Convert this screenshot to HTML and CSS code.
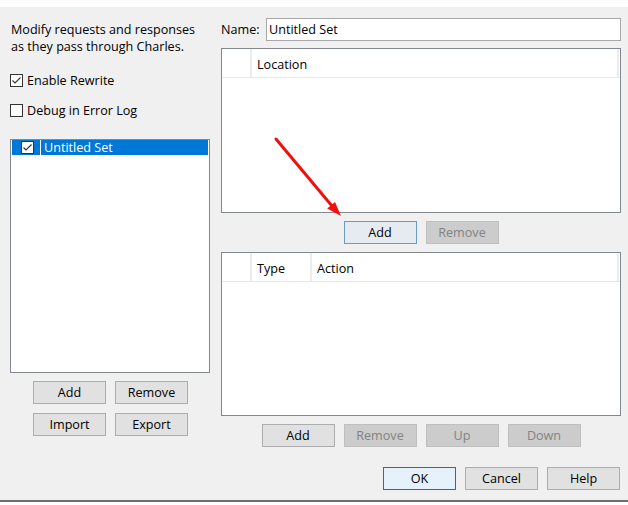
FILE: index.html
```html
<!DOCTYPE html>
<html>
<head>
<meta charset="utf-8">
<link rel="stylesheet" href="styles.css">
</head>
<body>
<div class="dialog">
  <div class="left">
    <p class="desc">Modify requests and responses<br>as they pass through Charles.</p>
    <label class="check first"><span class="box"><svg width="11" height="11" viewBox="0 0 11 11"><path d="M1.5 5.5 L4 8 L9.5 2.5" fill="none" stroke="#333" stroke-width="1.1"/></svg></span>Enable Rewrite</label>
    <label class="check second"><span class="box"></span>Debug in Error Log</label>
    <div class="list">
      <div class="list-row selected">
        <span class="cell-check"><span class="box small"><svg width="11" height="11" viewBox="0 0 11 11"><path d="M1.5 5.5 L4 8 L9.5 2.5" fill="none" stroke="#333" stroke-width="1.2"/></svg></span></span>
        <span class="cell-name">Untitled Set</span>
      </div>
    </div>
    <div class="btn-row left-btns first-row">
      <button class="btn">Add</button>
      <button class="btn">Remove</button>
    </div>
    <div class="btn-row left-btns second-row">
      <button class="btn">Import</button>
      <button class="btn">Export</button>
    </div>
  </div>
  <div class="right">
    <div class="name-row">
      <span class="name-label">Name:</span>
      <div class="name-input">Untitled Set</div>
    </div>
    <div class="table table-loc">
      <div class="thead">
        <span class="th th-blank"></span>
        <span class="th th-last">Location</span>
      </div>
    </div>
    <div class="btn-row center mid-row">
      <button class="btn focused">Add</button>
      <button class="btn disabled">Remove</button>
    </div>
    <div class="table table-act">
      <div class="thead">
        <span class="th th-blank"></span>
        <span class="th th-type">Type</span>
        <span class="th th-last">Action</span>
      </div>
    </div>
    <div class="btn-row center act-row">
      <button class="btn">Add</button>
      <button class="btn disabled">Remove</button>
      <button class="btn disabled">Up</button>
      <button class="btn disabled">Down</button>
    </div>
    <div class="btn-row end ok-row">
      <button class="btn default">OK</button>
      <button class="btn">Cancel</button>
      <button class="btn">Help</button>
    </div>
  </div>
  <svg class="arrow" width="628" height="505" viewBox="0 0 628 505">
    <line x1="276" y1="139" x2="332" y2="206" stroke="#f01010" stroke-width="3" stroke-linecap="round"/>
    <polygon points="341,216 327.2,208.4 335,202" fill="#f01010"/>
  </svg>
</div>
</body>
</html>
```
FILE: styles.css
```css
* { box-sizing: border-box; }
html, body { margin: 0; padding: 0; }
body {
  width: 628px;
  height: 505px;
  background: #ffffff;
  font-family: "Open Sans", "Noto Sans", sans-serif;
  font-size: 12.6px;
  color: #000;
  overflow: hidden;
}
.dialog {
  position: relative;
  margin-top: 7px;
  height: 495px;
  background: #f0f0f0;
  border-bottom: 2px solid #6e6e6e;
  display: flex;
  padding-left: 10px;
}
.left {
  width: 200px;
  display: flex;
  flex-direction: column;
}
.desc {
  margin: 14px 0 0 1px;
  line-height: 17px;
}
.check {
  display: flex;
  align-items: center;
  height: 13px;
  line-height: 13px;
  gap: 4px;
}
.check.first { margin-top: 19px; }
.check.second { margin-top: 17px; }
.box {
  width: 13px;
  height: 13px;
  border: 1px solid #333;
  background: #fff;
  display: flex;
  align-items: center;
  justify-content: center;
  flex: none;
}
.list {
  margin-top: 22px;
  height: 234px;
  border: 1px solid #828790;
  background: #fff;
  padding: 0 1px;
}
.list-row {
  height: 15px;
  display: flex;
  align-items: center;
}
.list-row.selected {
  background: #0078d7;
  color: #fff;
}
.cell-check {
  width: 29px;
  height: 15px;
  display: flex;
  align-items: center;
  padding-left: 9px;
  border-right: 1px solid #ffffff;
}
.cell-name {
  padding-left: 3px;
  line-height: 15px;
}
.btn-row {
  display: flex;
  gap: 9px;
}
.left-btns { justify-content: center; padding-left: 1px; }
.first-row { margin-top: 8px; }
.second-row { margin-top: 9px; }
.btn {
  width: 73px;
  height: 23px;
  border: 1px solid #adadad;
  background: #e1e1e1;
  font-family: inherit;
  font-size: 12.6px;
  color: #000;
  padding: 0;
  line-height: 21px;
}
.btn.focused {
  background: #e5ebf1;
  border-color: #6a9ac6;
}
.btn.default {
  background: #e5f1fb;
  border-color: #0078d7;
}
.btn.disabled {
  background: #cccccc;
  border-color: #bfbfbf;
  color: #838383;
}
.right {
  margin-left: 11px;
  width: 400px;
  display: flex;
  flex-direction: column;
}
.name-row {
  margin-top: 11px;
  display: flex;
  align-items: center;
  height: 23px;
}
.name-label {
  width: 45px;
  line-height: 23px;
}
.name-input {
  flex: 1;
  height: 23px;
  border: 1px solid #a8a8a8;
  background: #fff;
  padding-left: 2px;
  line-height: 21px;
}
.table {
  border: 1px solid #828790;
  background: #fff;
}
.table-loc { margin-top: 7px; height: 165px; }
.table-act { margin-top: 8px; height: 164px; }
.thead {
  height: 29px;
  display: flex;
  border-bottom: 1px solid #e8e8e8;
}
.th {
  height: 28px;
  line-height: 31px;
  padding-left: 5px;
  border-right: 2px solid #ececec;
}
.th-blank { width: 30px; padding: 0; }
.th-type { width: 60px; }
.th-last { flex: 1; margin-right: 1px; }
.center { justify-content: center; }
.mid-row { margin-top: 8px; }
.act-row { margin-top: 8px; }
.end { justify-content: flex-end; }
.ok-row { margin-top: 20px; padding-right: 1px; }
.arrow {
  position: absolute;
  left: 0;
  top: -7px;
  pointer-events: none;
}
```
